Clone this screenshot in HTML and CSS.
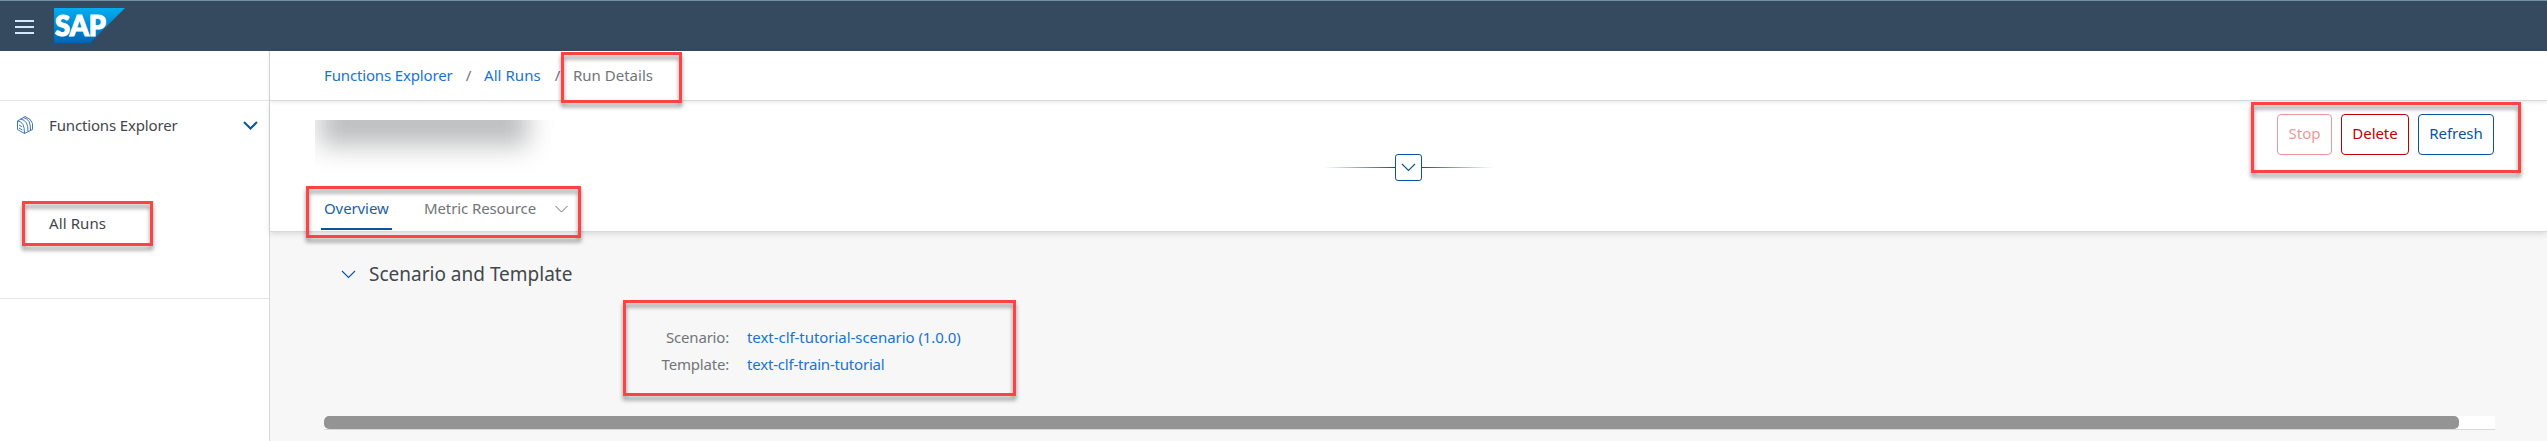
FILE: index.html
```
<!DOCTYPE html>
<html lang="en">
<head>
<meta charset="utf-8">
<title>Run Details</title>
<link rel="stylesheet" href="styles.css">
</head>
<body>
<div class="app">
  <header class="shell">
    <svg class="menu-icon" width="19" height="14" viewBox="0 0 19 14"><path d="M0 1h19M0 7h19M0 13h19" stroke="#d1e8ff" stroke-width="2"/></svg>
    <svg class="logo" width="71" height="35" viewBox="0 0 71 35">
      <defs><linearGradient id="lg" x1="0" y1="0" x2="0" y2="1"><stop offset="0" stop-color="#00aeef"/><stop offset="1" stop-color="#0064b4"/></linearGradient></defs>
      <path d="M0 0H71L36 35H0Z" fill="url(#lg)"/>
      <text class="logo-text" x="1" y="28" textLength="51" lengthAdjust="spacingAndGlyphs">SAP</text>
    </svg>
  </header>
  <div class="body">
    <nav class="side">
      <div class="side-top"></div>
      <div class="side-group">
        <div class="side-head">
          <svg class="fn-icon" width="16" height="18" viewBox="0 0 16 18" fill="none" stroke="#3f76b8" stroke-width="1"><path d="M.5 5v8.500L7.500 17.500l8-4V7.500Q14.500 3 8 .5L.5 5Q4 5 6 8.500q1.500 3 1.500 9M3.500 3q4 .5 6 4 1.500 3 1.500 8.500M6 1.500q4 .5 6 4 1.500 3 1.500 8.500M2 9l3 1.800M2 12l3.500 2"/></svg>
          <span class="side-label">Functions Explorer</span>
          <svg class="side-chev" width="15" height="9" viewBox="0 0 15 9" fill="none" stroke="#0854a0" stroke-width="2"><path d="M1 1l6.500 6.500L14 1"/></svg>
        </div>
        <div class="side-item"><span class="all-runs">All Runs</span></div>
      </div>
    </nav>
    <main class="main">
      <div class="crumbs"><a class="c1">Functions Explorer</a><span class="sep">/</span><a class="c2">All Runs</a><span class="sep">/</span><span class="c3">Run Details</span></div>
      <section class="head">
        <div class="head-row">
          <div class="redacted"><div class="smudge"></div></div>
          <div class="actions"><button class="btn stop">Stop</button><button class="btn delete">Delete</button><button class="btn refresh">Refresh</button></div>
        </div>
        <div class="tabs">
          <div class="tab active"><span class="t1">Overview</span></div>
          <div class="tab"><span class="t2">Metric Resource</span></div>
          <svg class="tab-chev" width="13" height="8" viewBox="0 0 13 8" fill="none" stroke="#6a6d70"><path d="M.5 1l6 6 6-6"/></svg>
        </div>
        <div class="expander"><i class="line left"></i><span class="toggle"><svg width="15" height="9" viewBox="0 0 15 9" fill="none" stroke="#0854a0" stroke-width="1.100"><path d="M1 1l6.500 6.500L14 1"/></svg></span><i class="line right"></i></div>
      </section>
      <section class="content">
        <div class="section-title"><svg width="15" height="9" viewBox="0 0 15 9" fill="none" stroke="#0854a0" stroke-width="1.100"><path d="M1 1l6.500 6.500L14 1"/></svg><h2>Scenario and Template</h2></div>
        <div class="form">
          <span class="label">Scenario:</span><a class="v1">text-clf-tutorial-scenario (1.0.0)</a>
          <span class="label">Template:</span><a class="v2">text-clf-train-tutorial</a>
        </div>
        <div class="scroll"><div class="thumb"></div></div>
      </section>
    </main>
  </div>
  <div class="mark mark-runs"></div>
  <div class="mark mark-crumb"></div>
  <div class="mark mark-tabs"></div>
  <div class="mark mark-form"></div>
  <div class="mark mark-actions"></div>
</div>
</body>
</html>
```
FILE: styles.css
```
* { box-sizing: border-box; }
body { margin: 0; font: 15px/20px "Noto Sans", sans-serif; color: #43474b; background: #fff; }
.app { position: relative; width: 2547px; height: 441px; overflow: hidden; display: flex; flex-direction: column; }
.shell { flex: none; height: 51px; background: #354a5f; border-top: 1px solid #7191a0; display: flex; align-items: flex-start; padding-left: 15px; }
.menu-icon { margin: 19px 20px 0 0; flex: none; }
.logo { margin-top: 7px; flex: none; display: block; }
.logo-text { font: 900 29px "Lato", "Open Sans", sans-serif; fill: #fff; stroke: #fff; stroke-width: 1.200px; }
.body { flex: 1; display: flex; min-height: 0; }
.side { width: 270px; flex: none; border-right: 1px solid #d9d9d9; }
.side-top { height: 50px; border-bottom: 1px solid #e5e5e5; }
.side-group { height: 198px; border-bottom: 1px solid #e5e5e5; }
.side-head { height: 48px; display: flex; align-items: center; padding: 0 11px 0 17px; }
.fn-icon { margin-right: 16px; }
.side-label { flex: 1; letter-spacing: -.15px; margin-top: -1px; }
.side-item { padding: 64px 0 0 49px; letter-spacing: .1px; }
a { color: #1873d3; text-decoration: none; }
.main { flex: 1; display: flex; flex-direction: column; min-width: 0; background: #f7f7f7; }
.crumbs { height: 50px; flex: none; background: #fff; border-bottom: 1px solid #d9d9d9; display: flex; align-items: center; padding: 0 0 2px 54px; box-shadow: 0 1px 4px rgba(0,0,0,.1); z-index: 1; color: #727578; }
.c1 { width: 129px; letter-spacing: -.15px; white-space: nowrap; }
.c2 { width: 58px; letter-spacing: .05px; white-space: nowrap; }
.sep { width: 31px; text-align: center; }
.head { height: 131px; flex: none; background: #fff; border-bottom: 1px solid #d9d9d9; box-shadow: 0 2px 6px rgba(0,0,0,.12); display: flex; flex-direction: column; position: relative; }
.head-row { height: 85px; display: flex; justify-content: space-between; padding: 13px 53px 0 45px; }
.redacted { width: 250px; height: 52px; margin-top: 6px; overflow: hidden; }
.smudge { width: 208px; height: 46px; margin: -20px 0 0 5px; background: #bdbec0; filter: blur(13px); }
.actions { display: flex; gap: 9px; }
.btn { height: 41px; border: 1px solid; border-radius: 4px; background: #fff; padding: 0 0 3px; font: inherit; letter-spacing: -.05px; }
.stop { width: 55px; color: #eb9999; }
.delete { width: 68px; color: #b00; }
.refresh { width: 76px; color: #0854a0; }
.tabs { height: 46px; display: flex; padding-left: 51px; color: #727578; letter-spacing: -.1px; }
.tab { height: 45px; padding: 13px 3px 0; margin-right: 29px; width: 71px; white-space: nowrap; }
.tab.active { color: #1a61a9; border-bottom: 2px solid #0854a0; }
.tab + .tab { width: 117px; margin-right: 17px; }
.tab-chev { margin-top: 20px; }
.expander { position: absolute; left: 1054px; top: 53px; display: flex; align-items: center; }
.line { width: 71px; height: 1px; background: linear-gradient(90deg, transparent, #0854a0); }
.line.right { background: linear-gradient(270deg, transparent, #0854a0); }
.toggle { width: 27px; height: 27px; border: 1px solid #0854a0; border-radius: 3px; background: #fff; display: flex; align-items: center; justify-content: center; }
.content { flex: 1; padding-left: 54px; }
.section-title { display: flex; align-items: center; padding: 29px 0 0 17px; gap: 13px; height: 56px; }
h2 { margin: 0; font-weight: 400; font-size: 19px; line-height: 27px; }
.form { display: grid; grid-template-columns: 405px 1fr; column-gap: 18px; grid-auto-rows: 27px; padding-top: 36px; line-height: 27px; letter-spacing: -.2px; }
.v1 { letter-spacing: -.05px; }
.label { text-align: right; color: #727578; }
.scroll { width: 2171px; height: 14px; margin-top: 38px; background: #fff; border-bottom: 1px solid #d9d9d9; }
.thumb { width: 2135px; height: 13px; border-radius: 5px; background: #949494; }
.mark { position: absolute; z-index: 3; border: 3px solid #ff4343; filter: drop-shadow(0 4px 2px rgba(0,0,0,.42)); }
.mark-runs { left: 22px; top: 201px; width: 131px; height: 45px; }
.mark-crumb { left: 561px; top: 52px; width: 121px; height: 51px; }
.mark-tabs { left: 306px; top: 186px; width: 275px; height: 52px; }
.mark-form { left: 623px; top: 300px; width: 393px; height: 96px; }
.mark-actions { left: 2251px; top: 102px; width: 270px; height: 71px; }
```
